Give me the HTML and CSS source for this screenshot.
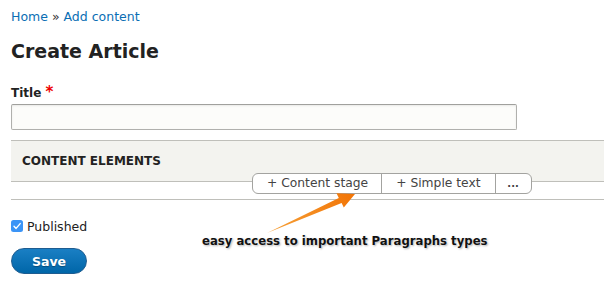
FILE: index.html
```html
<!DOCTYPE html>
<html lang="en">
<head>
    <meta charset="UTF-8">
    <title>Create Article</title>
    <link rel="stylesheet" href="styles.css">
</head>
<body>

    <!-- breadcrumb -->
    <div class="breadcrumb">
        <a href="#">Home</a> » <a href="#">Add content</a>
    </div>

    <h1 class="page-title">Create Article</h1>

    <!-- title field -->
    <div class="form-item">
        <label class="label">Title <span class="required">*</span></label>
        <input class="text-input" type="text">
    </div>

    <!-- paragraphs widget -->
    <div class="panel">
        <div class="panel-header">CONTENT ELEMENTS</div>
        <div class="panel-row"></div>
        <div class="add-group">
            <span class="add-item">+ Content stage</span>
            <span class="add-item">+ Simple text</span>
            <span class="add-item more">...</span>
        </div>
    </div>

    <div class="checkbox-row">
        <span class="checkbox">
            <svg width="12" height="12" viewBox="0 0 12 12">
                <rect x="0" y="0" width="12" height="12" rx="2.5" fill="#3b94f6"/>
                <path d="M3 6.2 L5.1 8.4 L9.2 3.6" fill="none" stroke="#fff" stroke-width="1.4" stroke-linecap="round" stroke-linejoin="round"/>
            </svg>
        </span>
        <span class="checkbox-label">Published</span>
    </div>

    <button class="save-button">Save</button>

    <!-- annotation on top of the screenshot -->
    <svg class="arrow" width="604" height="301" viewBox="0 0 604 301">
        <defs>
            <linearGradient id="arrowFill" x1="267" y1="233" x2="355" y2="194" gradientUnits="userSpaceOnUse">
                <stop offset="0" stop-color="#f6a23a"/>
                <stop offset="1" stop-color="#f27405"/>
            </linearGradient>
        </defs>
        <polygon points="267,233 338.8,197.9 336.5,193.3 355,194 343.8,207.6 341.6,203" fill="url(#arrowFill)"/>
    </svg>
    <div class="note">easy access to important Paragraphs types</div>

</body>
</html>
```

FILE: styles.css
```css
body {
    margin: 0;
    padding: 0 0 0 11px;
    background-color: #fff;
    color: #222;
    font-family: "DejaVu Sans", Verdana, sans-serif;
    position: relative;
    width: 593px;
    height: 301px;
    overflow: hidden;
}
/* breadcrumb */
.breadcrumb {
    padding-top: 8px;
    font-size: 12.5px;
    line-height: 18px;
    color: #333;
}
.breadcrumb a {
    color: #0a6eb4;
    text-decoration: none;
}
.page-title {
    margin: 13px 0 0 0;
    font-size: 19px;
    line-height: 24px;
    font-weight: bold;
    color: #222;
}
/* title field */
.form-item {
    margin-top: 21px;
}
.label {
    display: block;
    font-size: 12px;
    line-height: 16px;
    font-weight: bold;
    color: #222;
}
.required {
    color: #e00;
    font-size: 15px;
}
.text-input {
    display: block;
    box-sizing: border-box;
    margin-top: 3px;
    width: 506px;
    height: 26px;
    border: 1px solid #b0b0ad;
    border-top-color: #a0a09d;
    border-radius: 2px;
    background-color: #fcfcfa;
    box-shadow: inset 0 1px 2px rgba(0, 0, 0, 0.08);
}
/* paragraphs widget */
.panel {
    position: relative;
    margin-top: 10px;
    border-top: 1px solid #bfbfba;
}
.panel-header {
    height: 40px;
    line-height: 40px;
    padding-left: 11px;
    background-color: #f3f3ef;
    border-bottom: 1px solid #bfbfba;
    font-size: 12px;
    font-weight: bold;
    color: #222;
}
.panel-row {
    height: 17px;
    border-bottom: 1px solid #bfbfba;
}
.add-group {
    position: absolute;
    top: 32px;
    left: 241px;
    display: flex;
    height: 21px;
    box-sizing: border-box;
    border: 1px solid #a3a3a0;
    border-radius: 6px;
    background-color: #fff;
    font-size: 12.3px;
    line-height: 19px;
    color: #444;
}
.add-item {
    padding: 0 14px;
    border-left: 1px solid #a3a3a0;
}
.add-item:first-child {
    border-left: none;
    padding: 0 13px 0 14px;
}
.add-item.more {
    width: 36px;
    box-sizing: border-box;
    padding: 0;
    text-align: center;
    font-size: 10px;
    font-weight: bold;
}
/* published checkbox */
.checkbox-row {
    display: flex;
    align-items: center;
    margin-top: 19px;
    height: 14px;
}
.checkbox {
    display: flex;
    width: 12px;
    height: 12px;
    margin-right: 4px;
}
.checkbox-label {
    font-size: 12.5px;
    color: #222;
}
.save-button {
    display: block;
    margin-top: 15px;
    width: 76px;
    height: 26px;
    border: 1px solid #1e5c90;
    border-radius: 13px;
    background: linear-gradient(#1a7fc4, #0066a8);
    color: #fff;
    font-family: "DejaVu Sans", Verdana, sans-serif;
    font-size: 12.5px;
    font-weight: bold;
    text-shadow: 0 1px 1px rgba(0, 0, 0, 0.3);
    padding: 0;
}
/* annotation */
.arrow {
    position: absolute;
    top: 0;
    left: 0;
}
.note {
    position: absolute;
    left: 202px;
    top: 233px;
    font-size: 11.7px;
    line-height: 16px;
    font-weight: bold;
    color: #111;
    text-shadow: 0 0 2px #fff, 1px 1px 2px rgba(0, 0, 0, 0.35);
    white-space: nowrap;
}
```
